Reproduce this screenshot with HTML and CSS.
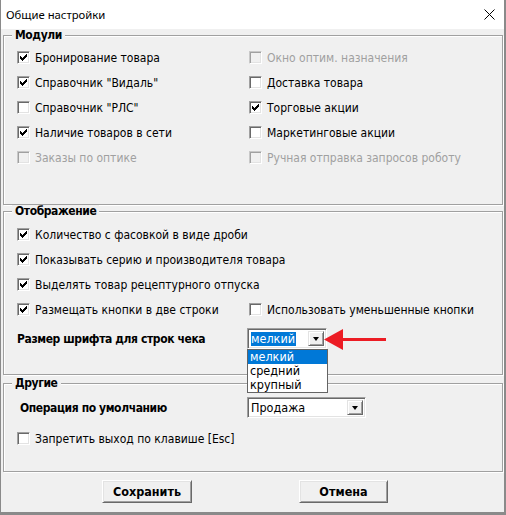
FILE: index.html
```html
<!DOCTYPE html>
<html lang="ru">
<head>
<meta charset="utf-8">
<title>Общие настройки</title>
<link rel="stylesheet" href="styles.css">
</head>
<body>
<div class="window">
  <div class="titlebar">
    <span class="title">Общие настройки</span>
    <svg class="close" width="11" height="11" viewBox="0 0 11 11"><path d="M0.5 0.5 L10.5 10.5 M10.5 0.5 L0.5 10.5" stroke="#000" stroke-width="1" fill="none"/></svg>
  </div>
  <div class="content">
    <fieldset class="group g1">
      <legend>Модули</legend>
      <div class="body grid2">
        <div class="row"><span class="cb on"></span><span>Бронирование товара</span></div>
        <div class="row disabled"><span class="cb"></span><span>Окно оптим. назначения</span></div>
        <div class="row"><span class="cb on"></span><span>Справочник "Видаль"</span></div>
        <div class="row"><span class="cb"></span><span>Доставка товара</span></div>
        <div class="row"><span class="cb"></span><span>Справочник "РЛС"</span></div>
        <div class="row"><span class="cb on"></span><span>Торговые акции</span></div>
        <div class="row"><span class="cb on"></span><span>Наличие товаров в сети</span></div>
        <div class="row"><span class="cb"></span><span>Маркетинговые акции</span></div>
        <div class="row disabled"><span class="cb"></span><span>Заказы по оптике</span></div>
        <div class="row disabled"><span class="cb"></span><span>Ручная отправка запросов роботу</span></div>
      </div>
    </fieldset>
    <fieldset class="group g2">
      <legend>Отображение</legend>
      <div class="body">
        <div class="row"><span class="cb on"></span><span>Количество с фасовкой в виде дроби</span></div>
        <div class="row"><span class="cb on"></span><span>Показывать серию и производителя товара</span></div>
        <div class="row"><span class="cb on"></span><span>Выделять товар рецептурного отпуска</span></div>
        <div class="grid2">
          <div class="row"><span class="cb on"></span><span>Размещать кнопки в две строки</span></div>
          <div class="row"><span class="cb"></span><span>Использовать уменьшенные кнопки</span></div>
        </div>
        <div class="field-row font-row">
          <span class="label">Размер шрифта для строк чека</span>
          <div class="combo-wrap">
            <div class="combo small">
              <span class="combo-text"><span class="sel">мелкий</span></span>
              <span class="combo-btn"><span class="tri"></span></span>
            </div>
            <ul class="dropdown">
              <li class="hl">мелкий</li>
              <li>средний</li>
              <li>крупный</li>
            </ul>
            <svg class="arrow" width="64" height="23" viewBox="0 0 64 23"><path d="M1 11.5 L20 1 L20 22 Z" fill="#ec1c24"/><rect x="19" y="10" width="44" height="3" fill="#ec1c24"/></svg>
          </div>
        </div>
      </div>
    </fieldset>
    <fieldset class="group g3">
      <legend>Другие</legend>
      <div class="body">
        <div class="field-row op-row">
          <span class="label">Операция по умолчанию</span>
          <div class="combo wide">
            <span class="combo-text">Продажа</span>
            <span class="combo-btn"><span class="tri"></span></span>
          </div>
        </div>
        <div class="row esc-row"><span class="cb"></span><span>Запретить выход по клавише [Esc]</span></div>
      </div>
    </fieldset>
    <div class="buttons">
      <button class="btn save">Сохранить</button>
      <button class="btn cancel">Отмена</button>
    </div>
  </div>
</div>
</body>
</html>
```
FILE: styles.css
```css
html, body {
  margin: 0;
  padding: 0;
  background: #f0f0f0;
}
.window {
  width: 506px;
  height: 515px;
  box-sizing: border-box;
  border-left: 1px solid #8a8a8a;
  border-right: 2px solid #8a8a8a;
  border-bottom: 3px solid #8a8a8a;
  background: #f0f0f0;
  display: flex;
  flex-direction: column;
  font-family: "DejaVu Sans Condensed", "DejaVu Sans", sans-serif;
  font-stretch: condensed;
  font-size: 12px;
  color: #000;
}
.titlebar {
  height: 29px;
  flex: none;
  background: #fff;
  display: flex;
  align-items: center;
  justify-content: space-between;
  padding: 0 9px 0 5px;
}
.title {
  font-family: "Noto Sans", "Open Sans", sans-serif;
  font-stretch: normal;
  font-size: 11.3px;
  color: #000;
}
.close {
  display: block;
}
.content {
  flex: 1;
  padding: 0 1px 0 2px;
  display: flex;
  flex-direction: column;
}
.group {
  margin: 0;
  padding: 0;
  min-width: 0;
  border: 1px solid #a0a0a0;
  box-shadow: 1px 1px 0 #fff, inset 1px 1px 0 #fff;
}
.group legend {
  margin-left: 8px;
  padding: 0 3px;
  line-height: 12px;
  font-weight: bold;
  letter-spacing: -0.4px;
  background: #f0f0f0;
}
.g1 .body { height: 163px; padding: 4px 0 0 13px; box-sizing: border-box; }
.g2 { margin-top: 0; }
.g2 .body { height: 157px; padding: 5px 0 0 13px; box-sizing: border-box; }
.g3 { margin-top: 2px; }
.g3 .body { height: 82px; padding: 6px 0 0 13px; box-sizing: border-box; }
.grid2 {
  display: grid;
  grid-template-columns: 232px 1fr;
  align-content: start;
}
.row {
  height: 25px;
  display: flex;
  align-items: center;
  white-space: nowrap;
}
.cb {
  width: 13px;
  height: 13px;
  box-sizing: border-box;
  flex: none;
  margin-right: 5px;
  border: 1px solid;
  border-color: #a0a0a0 #fff #fff #a0a0a0;
  box-shadow: inset 1px 1px 0 #696969, inset -1px -1px 0 #e3e3e3;
  background: #fff;
  position: relative;
}
.cb.on {
  background: #fff url("data:image/svg+xml,%3Csvg xmlns='http://www.w3.org/2000/svg' width='7' height='7' viewBox='0 0 7 7' shape-rendering='crispEdges'%3E%3Cpath d='M0 2h1v3H0zM1 3h1v3H1zM2 4h1v3H2zM3 3h1v3H3zM4 2h1v3H4zM5 1h1v3H5zM6 0h1v3H6z' fill='%23000'/%3E%3C/svg%3E") no-repeat 2px 2px;
}
.row.disabled { color: #a0a0a0; }
.row.disabled .cb {
  background: #f0f0f0;
  border-color: #c8c8c8 #fff #fff #c8c8c8;
  box-shadow: inset 1px 1px 0 #a0a0a0, inset -1px -1px 0 #e3e3e3;
}
.field-row {
  display: flex;
  align-items: center;
  height: 25px;
}
.font-row { margin-top: 4px; }
.label {
  font-weight: bold;
  letter-spacing: -0.4px;
  width: 230px;
  flex: none;
}
.op-row .label { padding-left: 3px; width: 227px; }
.esc-row { margin-top: 6px; }
.combo-wrap {
  position: relative;
}
.combo {
  display: flex;
  box-sizing: border-box;
  height: 21px;
  padding: 2px;
  border: 1px solid;
  border-color: #a0a0a0 #fff #fff #a0a0a0;
  box-shadow: inset 1px 1px 0 #696969, inset -1px -1px 0 #e3e3e3;
  background: #fff;
}
.combo.small { width: 80px; }
.combo.wide { width: 119px; }
.combo-text {
  flex: 1;
  display: flex;
  align-items: center;
  padding-left: 1px;
  line-height: 14px;
  font-size: 12.5px;
}
.sel {
  background: #0078d7;
  color: #fff;
  padding: 0 1px 0 0;
}
.combo-btn {
  width: 16px;
  box-sizing: border-box;
  background: #f0f0f0;
  border: 1px solid;
  border-color: #e3e3e3 #696969 #696969 #e3e3e3;
  box-shadow: inset 1px 1px 0 #fff, inset -1px -1px 0 #a0a0a0;
  display: flex;
  align-items: center;
  justify-content: center;
}
.tri {
  width: 0;
  height: 0;
  border-left: 3.5px solid transparent;
  border-right: 3.5px solid transparent;
  border-top: 4px solid #000;
}
.dropdown {
  position: absolute;
  left: 0;
  top: 100%;
  margin: 0;
  padding: 0;
  list-style: none;
  width: 81px;
  box-sizing: border-box;
  border: 1px solid #646464;
  background: #fff;
  z-index: 2;
  font-size: 12.5px;
}
.dropdown li {
  height: 14px;
  line-height: 14px;
  padding-left: 2px;
}
.dropdown li.hl {
  background: #0078d7;
  color: #fff;
}
.arrow {
  position: absolute;
  left: 76px;
  top: 0;
  z-index: 3;
}
.buttons {
  display: flex;
  margin-top: 8px;
  padding-left: 99px;
  gap: 107px;
}
.btn {
  height: 23px;
  box-sizing: border-box;
  font-family: inherit;
  font-stretch: condensed;
  font-size: 12.5px;
  font-weight: bold;
  color: #000;
  background: #f0f0f0;
  border: 1px solid;
  border-color: #fff #696969 #696969 #fff;
  box-shadow: inset 1px 1px 0 #e3e3e3, inset -1px -1px 0 #a0a0a0;
  padding: 0;
}
.btn.save { width: 90px; }
.btn.cancel { width: 89px; }
```
